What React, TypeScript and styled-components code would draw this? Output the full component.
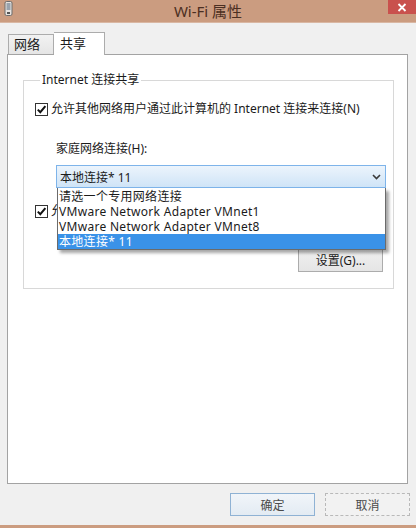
import styled, { createGlobalStyle } from 'styled-components';

const GlobalStyle = createGlobalStyle`
  html, body {
    margin: 0;
    padding: 0;
    background: #f0f0f0;
  }
  body {
    font-family: "Noto Sans", "Noto Sans CJK SC", sans-serif;
    font-size: 12px;
    color: #1b1b1b;
  }
`;

const homeOptions: string[] = [
  '请选一个专用网络连接',
  'VMware Network Adapter VMnet1',
  'VMware Network Adapter VMnet8',
  '本地连接* 11',
];

const App = () => {
  return (
    <Window>
      <GlobalStyle />
      <TitleBar>
        <TitleIcon>
          <svg width="9" height="15" viewBox="0 0 9 15">
            <rect x="1" y="0.5" width="7" height="14" rx="1.5" fill="#e8e4e0" stroke="#6d6d6d" />
            <rect x="2.5" y="2" width="4" height="7" fill="#9aa3ad" />
            <rect x="3" y="11" width="3" height="2" fill="#555" />
          </svg>
        </TitleIcon>
        <Title>Wi-Fi 属性</Title>
        <CloseButton>
          <svg width="10" height="9" viewBox="0 0 10 9">
            <path d="M1.5 1 L8.5 8 M8.5 1 L1.5 8" stroke="#fff" strokeWidth="1.8" />
          </svg>
        </CloseButton>
      </TitleBar>

      <Body>
        <TabRow>
          <Tab>网络</Tab>
          <Tab active>共享</Tab>
        </TabRow>

        <Panel>
          <Group>
            <Legend>Internet 连接共享</Legend>
            <CheckRow top={13}>
              <CheckBox checked />
              <span>允许其他网络用户通过此计算机的 Internet 连接来连接(N)</span>
            </CheckRow>

            <FieldLabel>家庭网络连接(H):</FieldLabel>
            <ComboWrap>
              <Combo>
                <span>本地连接* 11</span>
                <svg width="9" height="6" viewBox="0 0 9 6">
                  <path d="M1 1 L4.5 4.5 L8 1" stroke="#3a3a3a" strokeWidth="1.6" fill="none" />
                </svg>
              </Combo>
              <DropList>
                {homeOptions.map((opt, i) => (
                  <DropItem key={opt} selected={i === homeOptions.length - 1}>
                    {opt}
                  </DropItem>
                ))}
              </DropList>
            </ComboWrap>

            <CheckRow top={15}>
              <CheckBox checked />
              <span>允许其他网络用户控制或禁用共享的 Internet 连接(O)</span>
            </CheckRow>

            <SettingsButton>设置(G)...</SettingsButton>
          </Group>
        </Panel>

        <Footer>
          <DialogButton primary>确定</DialogButton>
          <DialogButton>取消</DialogButton>
        </Footer>
      </Body>
      <BottomEdge />
    </Window>
  );
};

const CheckBox = ({ checked }: { checked?: boolean }) => (
  <Box>
    {checked && (
      <svg width="11" height="11" viewBox="0 0 11 11">
        <path d="M1.8 5.6 L4.3 8.2 L9.4 2.2" stroke="#111" strokeWidth="2" fill="none" />
      </svg>
    )}
  </Box>
);

const Window = styled.div`
  width: 416px;
  height: 528px;
  display: flex;
  flex-direction: column;
  overflow: hidden;
`;

const TitleBar = styled.div`
  height: 23px;
  flex: none;
  display: grid;
  grid-template-columns: 28px 1fr 28px;
  background: #cb9c80;
  border-bottom: 1px solid #d9b7a3;
  box-sizing: border-box;
`;

const TitleIcon = styled.div`
  display: flex;
  align-items: flex-start;
  padding: 1px 0 0 4px;
`;

const Title = styled.div`
  text-align: center;
  font-size: 15px;
  line-height: 22px;
  color: #4b2f22;
`;

const CloseButton = styled.div`
  height: 14px;
  background: #c9514d;
  display: flex;
  align-items: center;
  justify-content: center;
`;

const Body = styled.div`
  flex: 1;
  display: flex;
  flex-direction: column;
  padding-top: 9px;
`;

const TabRow = styled.div`
  height: 22px;
  display: flex;
  align-items: flex-end;
  padding-left: 8px;
`;

const Tab = styled.div<{ active?: boolean }>`
  box-sizing: border-box;
  width: ${(p) => (p.active ? 51 : 46)}px;
  height: ${(p) => (p.active ? 23 : 20)}px;
  margin-bottom: ${(p) => (p.active ? -1 : 0)}px;
  position: relative;
  z-index: ${(p) => (p.active ? 1 : 0)};
  border: 1px solid #acacac;
  border-bottom: none;
  border-left: ${(p) => (p.active ? 'none' : '1px solid #acacac')};
  background: ${(p) => (p.active ? '#ffffff' : 'linear-gradient(#f2f2f2, #e5e5e5)')};
  font-size: 13px;
  line-height: ${(p) => (p.active ? 20 : 19)}px;
  padding-left: ${(p) => (p.active ? 6 : 5)}px;
`;

const Panel = styled.div`
  box-sizing: border-box;
  height: 430px;
  margin: 0 8px 0 7px;
  background: #fff;
  border: 1px solid #a3a3a3;
  padding: 17px 13px 0 15px;
`;

const Group = styled.fieldset`
  margin: 0;
  padding: 0 7px 16px 11px;
  border: 1px solid #d8d8d8;
  display: flex;
  flex-direction: column;
  min-width: 0;
`;

const Legend = styled.legend`
  padding: 0 2px;
  margin-left: 5px;
  line-height: 16px;
  font-size: 12px;
`;

const CheckRow = styled.div<{ top: number }>`
  margin-top: ${(p) => p.top}px;
  height: 16px;
  display: flex;
  align-items: center;
  gap: 3px;
  white-space: nowrap;
  line-height: 16px;
`;

const Box = styled.span`
  box-sizing: border-box;
  width: 13px;
  height: 13px;
  flex: none;
  border: 1px solid #333;
  background: #fff;
  display: flex;
  align-items: center;
  justify-content: center;
`;

const FieldLabel = styled.div`
  margin: 24px 0 0 21px;
  line-height: 16px;
`;

const ComboWrap = styled.div`
  position: relative;
  margin: 8px 0 0 21px;
`;

const Combo = styled.div`
  box-sizing: border-box;
  height: 23px;
  border: 1px solid #7eb4ea;
  background: linear-gradient(#ecf4fc, #cfe4f7);
  display: flex;
  align-items: center;
  justify-content: space-between;
  padding: 0 4px 0 3px;
`;

const DropList = styled.div`
  position: absolute;
  top: 100%;
  left: 1px;
  right: 0;
  z-index: 2;
  background: #fff;
  border: 1px solid #6b6b6b;
  border-top: none;
  padding-top: 1px;
  box-shadow: 3px 3px 3px rgba(0, 0, 0, 0.35);
`;

const DropItem = styled.div<{ selected?: boolean }>`
  height: 15px;
  line-height: 15px;
  padding-left: 1px;
  white-space: nowrap;
  letter-spacing: 0.3px;
  background: ${(p) => (p.selected ? '#3a92e8' : 'transparent')};
  color: ${(p) => (p.selected ? '#fff' : '#1b1b1b')};
`;

const SettingsButton = styled.button`
  align-self: flex-end;
  margin: 29px 3px 0 0;
  width: 85px;
  height: 24px;
  border: 1px solid #acacac;
  background: linear-gradient(#f0f0f0, #e5e5e5);
  font: inherit;
  color: #1b1b1b;
  padding: 0;
`;

const Footer = styled.div`
  display: flex;
  justify-content: flex-end;
  gap: 10px;
  padding: 9px 6px 0 0;
`;

const DialogButton = styled.button<{ primary?: boolean }>`
  width: 85px;
  height: 23px;
  padding: 0;
  font: inherit;
  color: #4a4a4a;
  border: 1px ${(p) => (p.primary ? 'solid #8fb2d4' : 'dashed #b9b9b9')};
  background: ${(p) => (p.primary ? 'linear-gradient(#f1f5f9, #e3ebf3)' : '#f2f2f2')};
`;

const BottomEdge = styled.div`
  height: 3px;
  flex: none;
  background: #cb9c80;
`;

export default App;
